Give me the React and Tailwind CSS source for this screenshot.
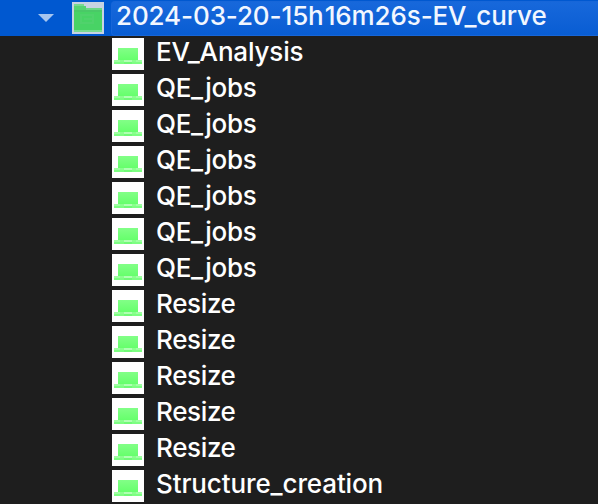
const rows = [
  ['EV_Analysis', 'tracking-[-0.16px]'],
  ...Array.from({ length: 6 }, () => ['QE_jobs', 'tracking-[-0.3px]']),
  ...Array.from({ length: 5 }, () => ['Resize', 'tracking-[-0.36px]']),
  ['Structure_creation', 'tracking-[-0.12px]'],
];

function JobIcon() {
  return (
    <svg className="size-8 shrink-0" viewBox="0 0 32 32" shapeRendering="crispEdges">
      <defs>
        <linearGradient id="screen" x1="0" y1="0" x2="0" y2="1">
          <stop offset="0" stopColor="#82ff87" />
          <stop offset="1" stopColor="#66ff6c" />
        </linearGradient>
      </defs>
      <rect width="32" height="32" fill="#fff" />
      <rect x="6" y="10" width="20" height="12" fill="url(#screen)" />
      <rect x="2" y="22" width="28" height="2" fill="#a0ffa3" />
      <rect x="8" y="22" width="4" height="2" fill="#8aff8e" />
      <rect x="12" y="22" width="8" height="2" fill="#b0ffb3" />
      <rect x="20" y="22" width="4" height="2" fill="#8aff8e" />
      <rect x="2" y="24" width="28" height="2" fill="#7dff82" />
      <rect x="12" y="24" width="8" height="2" fill="#70fa76" />
    </svg>
  );
}

function FolderIcon() {
  return (
    <svg className="size-8 shrink-0" viewBox="0 0 32 32" shapeRendering="crispEdges">
      <rect width="32" height="32" fill="#c8d3e2" />
      <path d="M2 2h10v2h2v2h16v4H2z" fill="#55d472" />
      <path d="M2 2h10v2H2z" fill="#79d992" />
      <path d="M14 6h16v2H14z" fill="#6bd886" />
      <rect x="2" y="8" width="28" height="2" fill="#4ac967" />
      <rect x="2" y="10" width="28" height="18" fill="#48d365" />
      <path d="M8 12h14v2H10v6h2v2H8zM12 20h10v2H12zM20 14h2v6h-2zM12 16h8v2h-8z" fill="#50d26c" />
      <rect x="2" y="28" width="28" height="2" fill="#7bdc92" />
    </svg>
  );
}

export default function App() {
  return (
    <div className="h-[504px] w-[598px] overflow-hidden bg-[#1e1e1e] font-['Inter',sans-serif] text-[26px] leading-8 font-medium text-white">
      <div className="flex h-9 items-center bg-[#0058d0]">
        <svg className="ml-[38px] h-2 w-4 shrink-0" viewBox="0 0 16 8">
          <path d="M0 0h16L8 8z" fill="#a6c5ef" />
        </svg>
        <div className="ml-[18px] flex">
          <FolderIcon />
        </div>
        <div className="ml-[7px] flex h-[35px] flex-1 items-center rounded-l-sm border-y border-l border-[#1766d8] bg-linear-to-b from-[#1768db] to-[#085dd3] pb-1 pl-1 text-[#f2f7ff]">
          <span className="whitespace-nowrap tracking-[-0.11px]">
            2024-03-20-15h<span className="ml-px">16m26s-EV_curve</span>
          </span>
        </div>
      </div>
      {rows.map(([label, tracking], i) => (
        <div key={i} className="flex h-9 items-center pl-28">
          <JobIcon />
          <span className={`ml-3 whitespace-nowrap pb-1 ${tracking}`}>{label}</span>
        </div>
      ))}
    </div>
  );
}
